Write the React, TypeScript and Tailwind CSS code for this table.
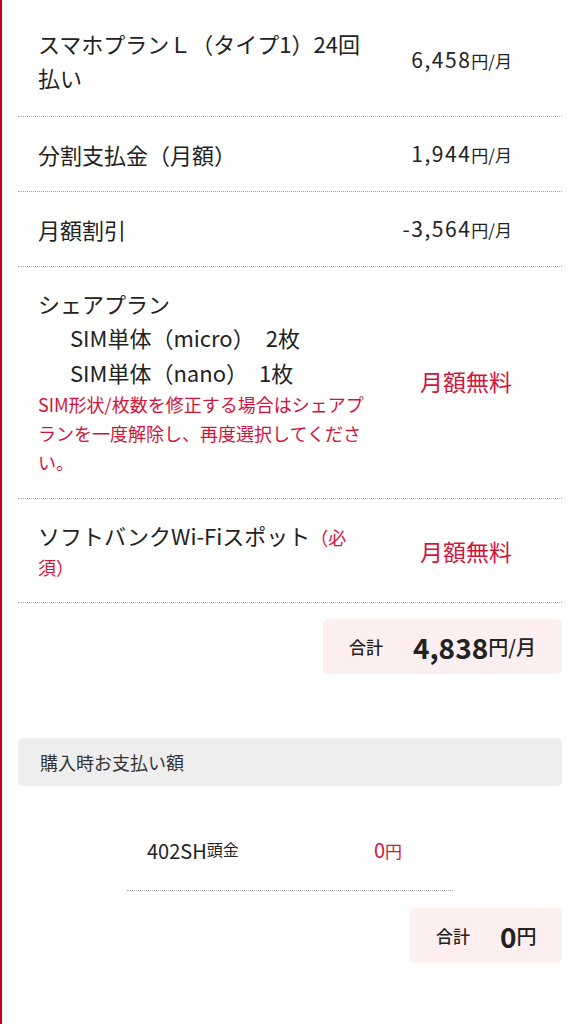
import React from 'react';

const red = 'text-[#d3133b]';

type Row = {
  label: React.ReactNode;
  value: React.ReactNode;
  pad: string;
};

const Price: React.FC<{ amount: string }> = ({ amount }) => (
  <span className="whitespace-nowrap text-[#222]">
    <span className="text-[21px] tracking-[1.5px]">{amount}</span>
    <span className="text-[17px]">円/月</span>
  </span>
);

const Free: React.FC = () => (
  <span className={`text-[23px] ${red}`}>月額無料</span>
);

const App: React.FC = () => {
  const rows: Row[] = [
    {
      label: (
        <>
          スマホプランＬ（タイプ1）24回
          <br />
          払い
        </>
      ),
      value: <Price amount="6,458" />,
      pad: 'pt-[26px] pb-[22px]',
    },
    {
      label: '分割支払金（月額）',
      value: <Price amount="1,944" />,
      pad: 'py-[20px]',
    },
    {
      label: '月額割引',
      value: <Price amount="-3,564" />,
      pad: 'py-[20px]',
    },
    {
      label: (
        <>
          <div>シェアプラン</div>
          <div className="pl-[32px] leading-[35px]">SIM単体（micro）　2枚</div>
          <div className="pl-[32px] leading-[35px]">SIM単体（nano）　1枚</div>
          <div className={`text-[18px] leading-[29px] ${red}`}>
            SIM形状/枚数を修正する場合はシェアプ
            <br />
            ランを一度解除し、再度選択してくださ
            <br />
            い。
          </div>
        </>
      ),
      value: <Free />,
      pad: 'pt-[19px] pb-[21px]',
    },
    {
      label: (
        <>
          <div className="h-[32px] leading-[32px]">
            ソフトバンクWi-Fiスポット
            <span className={`text-[18px] ${red}`}>（必</span>
          </div>
          <div className={`h-[32px] text-[18px] leading-[32px] ${red}`}>須）</div>
        </>
      ),
      value: <Free />,
      pad: 'pt-[20px] pb-[19px]',
    },
  ];

  return (
    <div
      className="min-h-[1024px] w-[576px] border-l-[2px] border-[#c4001a] bg-white text-[#222]"
      style={{ fontFamily: '"Noto Sans CJK JP", "Noto Sans", sans-serif' }}
    >
      <div className="pl-[16px] pr-[14px]">
        {rows.map((row, i) => (
          <div
            key={i}
            className={`flex items-center border-b border-dotted border-[#a8a8a8] pl-[20px] ${row.pad}`}
          >
            <div className="w-[350px] whitespace-nowrap text-[22px] leading-[34px]">
              {row.label}
            </div>
            <div className="flex-1 pr-[50px] text-right">{row.value}</div>
          </div>
        ))}

        <div className="mt-[16px] flex justify-end">
          <div className="flex h-[55px] w-[239px] items-center rounded-[5px] bg-[#fdeef0] pl-[26px]">
            <span className="text-[17px] font-medium">合計</span>
            <span className="ml-[30px] text-[28px] font-bold">4,838</span>
            <span className="text-[20px] font-medium">円/月</span>
          </div>
        </div>

        <div className="mt-[64px] flex h-[48px] items-center rounded-[5px] bg-[#eeeeee] pl-[22px] text-[18px] text-[#333]">
          購入時お支払い額
        </div>

        <div className="mx-auto mt-[40px] w-[326px] border-b border-dotted border-[#a8a8a8] pt-[8px] pb-[23px]">
          <div className="flex items-center leading-[30px]">
            <div className="w-[247px] pl-[20px]">
              <span className="text-[20px]">402SH</span>
              <span className="align-[3px] text-[16px]">頭金</span>
            </div>
            <div className={`${red}`}>
              <span className="text-[20px]">0</span>
              <span className="text-[17px]">円</span>
            </div>
          </div>
        </div>

        <div className="mt-[17px] flex justify-end">
          <div className="flex h-[55px] w-[152px] items-center rounded-[5px] bg-[#fdeef0] pl-[26px]">
            <span className="text-[17px] font-medium">合計</span>
            <span className="ml-[30px] text-[28px] font-bold">0</span>
            <span className="text-[20px] font-medium">円</span>
          </div>
        </div>
      </div>
    </div>
  );
};

export default App;
